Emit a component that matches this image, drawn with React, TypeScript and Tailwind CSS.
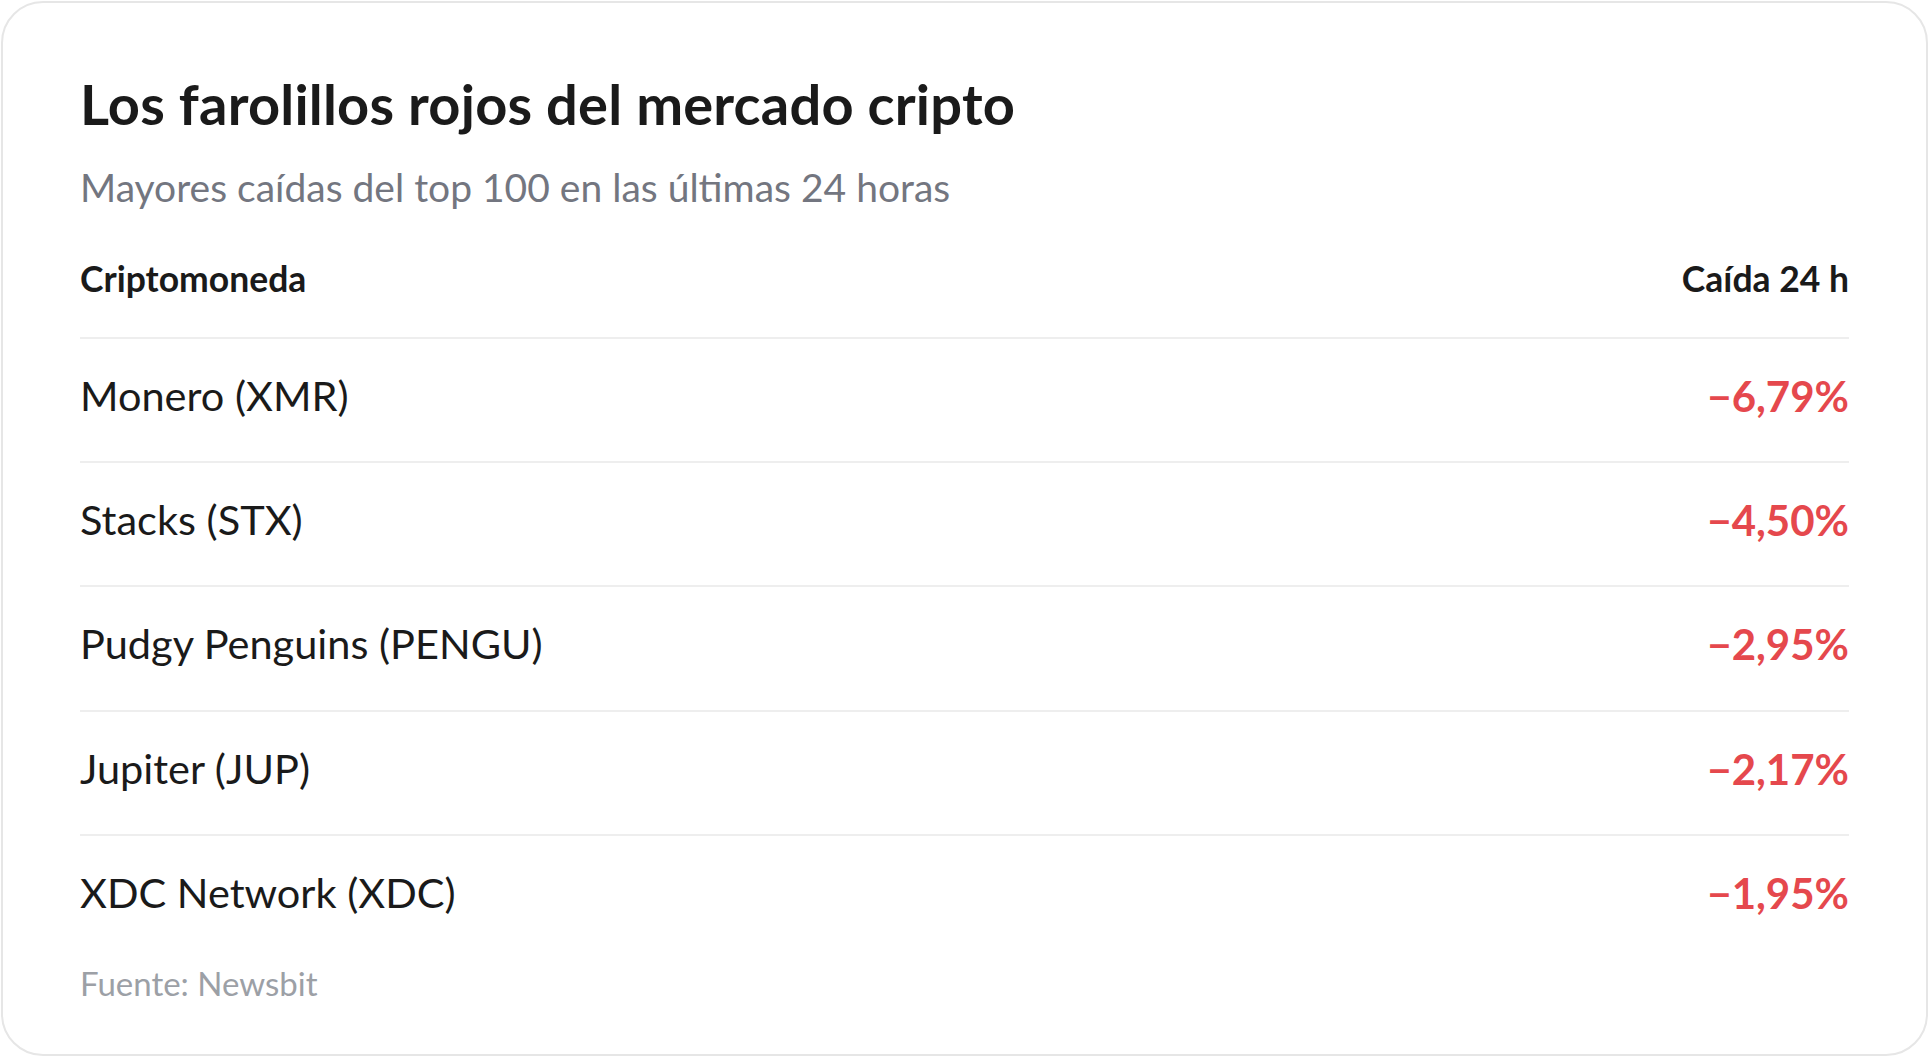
import React from "react";

const rows = [
  { name: "Monero (XMR)", value: "−6,79%" },
  { name: "Stacks (STX)", value: "−4,50%" },
  { name: "Pudgy Penguins (PENGU)", value: "−2,95%" },
  { name: "Jupiter (JUP)", value: "−2,17%" },
  { name: "XDC Network (XDC)", value: "−1,95%" },
];

export default function App() {
  return (
    <div className="min-h-screen bg-white pl-px pt-px" style={{ fontFamily: "Lato, 'Noto Sans', sans-serif" }}>
      <div className="w-[1927px] h-[1055px] rounded-[42px] border-2 border-[#e6e6e6] bg-white px-[77px] pt-[67px]">
        <h1 className="text-[56px] leading-[1.2] font-bold text-[#1a1a1a] tracking-[0.2px]">
          Los farolillos rojos del mercado cripto
        </h1>
        <p className="mt-[27px] text-[39px] leading-[1.2] text-[#737680]">
          Mayores caídas del top 100 en las últimas 24 horas
        </p>
        <div className="mt-[47px] flex justify-between border-b-2 border-[#eeeeee] pb-[36px] text-[35.5px] leading-[1.2] font-bold text-[#1a1a1a]">
          <span>Criptomoneda</span>
          <span>Caída 24 h</span>
        </div>
        {rows.map((r, i) => (
          <div
            key={r.name}
            className={
              i < rows.length - 1
                ? "flex justify-between border-b-2 border-[#eeeeee] pt-[32px] pb-[40px] text-[41.5px] leading-[1.2]"
                : "flex justify-between pt-[32px] pb-[40px] text-[41.5px] leading-[1.2]"
            }
          >
            <span className="text-[#1a1a1a]">{r.name}</span>
            <span className="font-bold text-[#e5484d] text-[42px]">{r.value}</span>
          </div>
        ))}
        <p className="mt-[5px] text-[33px] leading-[1.2] text-[#9ca0a6]">Fuente: Newsbit</p>
      </div>
    </div>
  );
}
